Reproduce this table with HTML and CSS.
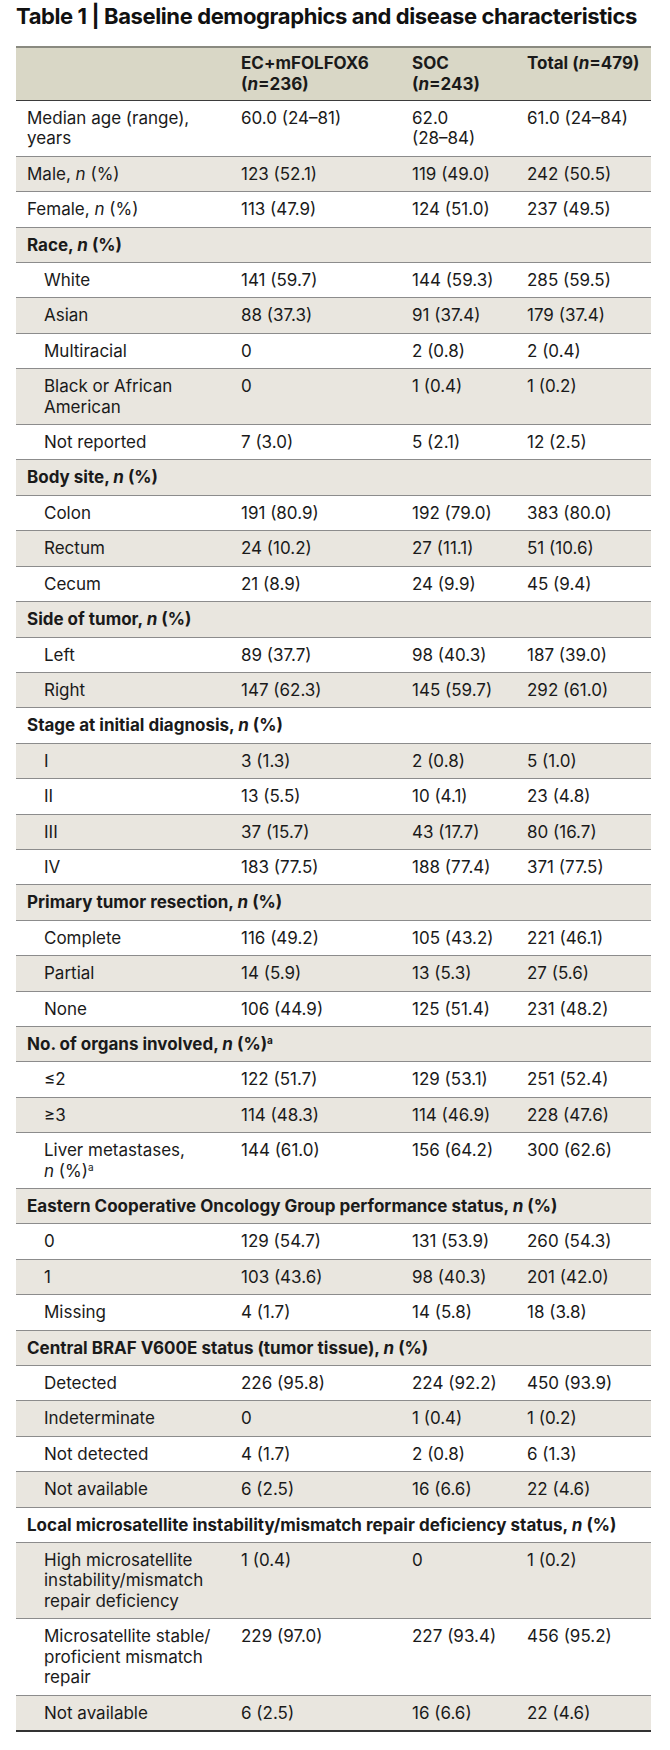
FILE: index.html
```html
<!DOCTYPE html>
<html lang="en">
<head>
<meta charset="utf-8">
<title>Table 1 | Baseline demographics and disease characteristics</title>
<link rel="stylesheet" href="styles.css">
</head>
<body>
<main class="page">
  <h1 class="title">Table 1 | Baseline demographics and disease characteristics</h1>
  <table class="data">
    <colgroup>
      <col class="c-label">
      <col class="c-ec">
      <col class="c-soc">
      <col class="c-total">
    </colgroup>
    <thead>
      <tr>
        <th></th>
        <th>EC+mFOLFOX6 <span class="nb">(<i>n</i>=236)</span></th>
        <th>SOC <span class="nb">(<i>n</i>=243)</span></th>
        <th>Total <span class="nb">(<i>n</i>=479)</span></th>
      </tr>
    </thead>
    <tbody>
      <tr><td>Median age (range), years</td><td>60.0 (24–81)</td><td>62.0 <span class="nb">(28–84)</span></td><td>61.0 (24–84)</td></tr>
      <tr><td>Male, <i>n</i> (%)</td><td>123 (52.1)</td><td>119 (49.0)</td><td>242 (50.5)</td></tr>
      <tr><td>Female, <i>n</i> (%)</td><td>113 (47.9)</td><td>124 (51.0)</td><td>237 (49.5)</td></tr>
      <tr class="group"><td colspan="4">Race, <i>n</i> (%)</td></tr>
      <tr><td class="sub">White</td><td>141 (59.7)</td><td>144 (59.3)</td><td>285 (59.5)</td></tr>
      <tr><td class="sub">Asian</td><td>88 (37.3)</td><td>91 (37.4)</td><td>179 (37.4)</td></tr>
      <tr><td class="sub">Multiracial</td><td>0</td><td>2 (0.8)</td><td>2 (0.4)</td></tr>
      <tr><td class="sub">Black or African American</td><td>0</td><td>1 (0.4)</td><td>1 (0.2)</td></tr>
      <tr><td class="sub">Not reported</td><td>7 (3.0)</td><td>5 (2.1)</td><td>12 (2.5)</td></tr>
      <tr class="group"><td colspan="4">Body site, <i>n</i> (%)</td></tr>
      <tr><td class="sub">Colon</td><td>191 (80.9)</td><td>192 (79.0)</td><td>383 (80.0)</td></tr>
      <tr><td class="sub">Rectum</td><td>24 (10.2)</td><td>27 (11.1)</td><td>51 (10.6)</td></tr>
      <tr><td class="sub">Cecum</td><td>21 (8.9)</td><td>24 (9.9)</td><td>45 (9.4)</td></tr>
      <tr class="group"><td colspan="4">Side of tumor, <i>n</i> (%)</td></tr>
      <tr><td class="sub">Left</td><td>89 (37.7)</td><td>98 (40.3)</td><td>187 (39.0)</td></tr>
      <tr><td class="sub">Right</td><td>147 (62.3)</td><td>145 (59.7)</td><td>292 (61.0)</td></tr>
      <tr class="group"><td colspan="4">Stage at initial diagnosis, <i>n</i> (%)</td></tr>
      <tr><td class="sub">I</td><td>3 (1.3)</td><td>2 (0.8)</td><td>5 (1.0)</td></tr>
      <tr><td class="sub">II</td><td>13 (5.5)</td><td>10 (4.1)</td><td>23 (4.8)</td></tr>
      <tr><td class="sub">III</td><td>37 (15.7)</td><td>43 (17.7)</td><td>80 (16.7)</td></tr>
      <tr><td class="sub">IV</td><td>183 (77.5)</td><td>188 (77.4)</td><td>371 (77.5)</td></tr>
      <tr class="group"><td colspan="4">Primary tumor resection, <i>n</i> (%)</td></tr>
      <tr><td class="sub">Complete</td><td>116 (49.2)</td><td>105 (43.2)</td><td>221 (46.1)</td></tr>
      <tr><td class="sub">Partial</td><td>14 (5.9)</td><td>13 (5.3)</td><td>27 (5.6)</td></tr>
      <tr><td class="sub">None</td><td>106 (44.9)</td><td>125 (51.4)</td><td>231 (48.2)</td></tr>
      <tr class="group"><td colspan="4">No. of organs involved, <i>n</i> (%)<sup>a</sup></td></tr>
      <tr><td class="sub">≤2</td><td>122 (51.7)</td><td>129 (53.1)</td><td>251 (52.4)</td></tr>
      <tr><td class="sub">≥3</td><td>114 (48.3)</td><td>114 (46.9)</td><td>228 (47.6)</td></tr>
      <tr><td class="sub">Liver metastases, <span class="nb"><i>n</i> (%)<sup>a</sup></span></td><td>144 (61.0)</td><td>156 (64.2)</td><td>300 (62.6)</td></tr>
      <tr class="group"><td colspan="4">Eastern Cooperative Oncology Group performance status, <i>n</i> (%)</td></tr>
      <tr><td class="sub">0</td><td>129 (54.7)</td><td>131 (53.9)</td><td>260 (54.3)</td></tr>
      <tr><td class="sub">1</td><td>103 (43.6)</td><td>98 (40.3)</td><td>201 (42.0)</td></tr>
      <tr><td class="sub">Missing</td><td>4 (1.7)</td><td>14 (5.8)</td><td>18 (3.8)</td></tr>
      <tr class="group"><td colspan="4">Central BRAF V600E status (tumor tissue), <i>n</i> (%)</td></tr>
      <tr><td class="sub">Detected</td><td>226 (95.8)</td><td>224 (92.2)</td><td>450 (93.9)</td></tr>
      <tr><td class="sub">Indeterminate</td><td>0</td><td>1 (0.4)</td><td>1 (0.2)</td></tr>
      <tr><td class="sub">Not detected</td><td>4 (1.7)</td><td>2 (0.8)</td><td>6 (1.3)</td></tr>
      <tr><td class="sub">Not available</td><td>6 (2.5)</td><td>16 (6.6)</td><td>22 (4.6)</td></tr>
      <tr class="group"><td colspan="4">Local microsatellite instability/mismatch repair deficiency status, <i>n</i> (%)</td></tr>
      <tr><td class="sub">High microsatellite instability/mismatch repair deficiency</td><td>1 (0.4)</td><td>0</td><td>1 (0.2)</td></tr>
      <tr><td class="sub">Microsatellite stable/ proficient mismatch repair</td><td>229 (97.0)</td><td>227 (93.4)</td><td>456 (95.2)</td></tr>
      <tr><td class="sub">Not available</td><td>6 (2.5)</td><td>16 (6.6)</td><td>22 (4.6)</td></tr>
    </tbody>
  </table>
</main>
</body>
</html>
```

FILE: styles.css
```css
html, body {
  margin: 0;
  padding: 0;
  background: #ffffff;
}

.page {
  padding: 3px 19px 0 16px;
  font-family: Inter, "Liberation Sans", Arial, sans-serif;
  color: #1a1a1a;
}

.title {
  margin: 0 0 17px 0;
  font-size: 22px;
  line-height: 26px;
  font-weight: 700;
  letter-spacing: -0.4px;
  color: #111;
}

.data {
  width: 635px;
  table-layout: fixed;
  border-collapse: collapse;
  font-size: 17px;
  line-height: 20.4px;
}

.c-label { width: 214px; }
.c-ec { width: 171px; }
.c-soc { width: 115px; }
.c-total { width: 135px; }

.data th,
.data td {
  text-align: left;
  vertical-align: top;
  padding: 7px 18px 7px 11px;
  border-bottom: 1px solid #8c8c8c;
}

.data th {
  font-weight: 700;
  line-height: 21px;
  background: #d9d7c6;
  padding-top: 5px;
  padding-bottom: 5px;
  border-top: 2px solid #8a8a80;
  border-bottom: 1px solid #3b3b3b;
}

.data th:last-child {
  padding-right: 2px;
}

.data tbody tr:nth-child(even) td {
  background: #e9e6df;
}

.data tbody tr:last-child td {
  border-bottom: 2px solid #333;
}

.data td.sub {
  padding-left: 28px;
}

.group td {
  font-weight: 700;
}

.nb {
  white-space: nowrap;
}

.data sup {
  font-size: 10px;
  line-height: 0;
  vertical-align: 6px;
}
```
